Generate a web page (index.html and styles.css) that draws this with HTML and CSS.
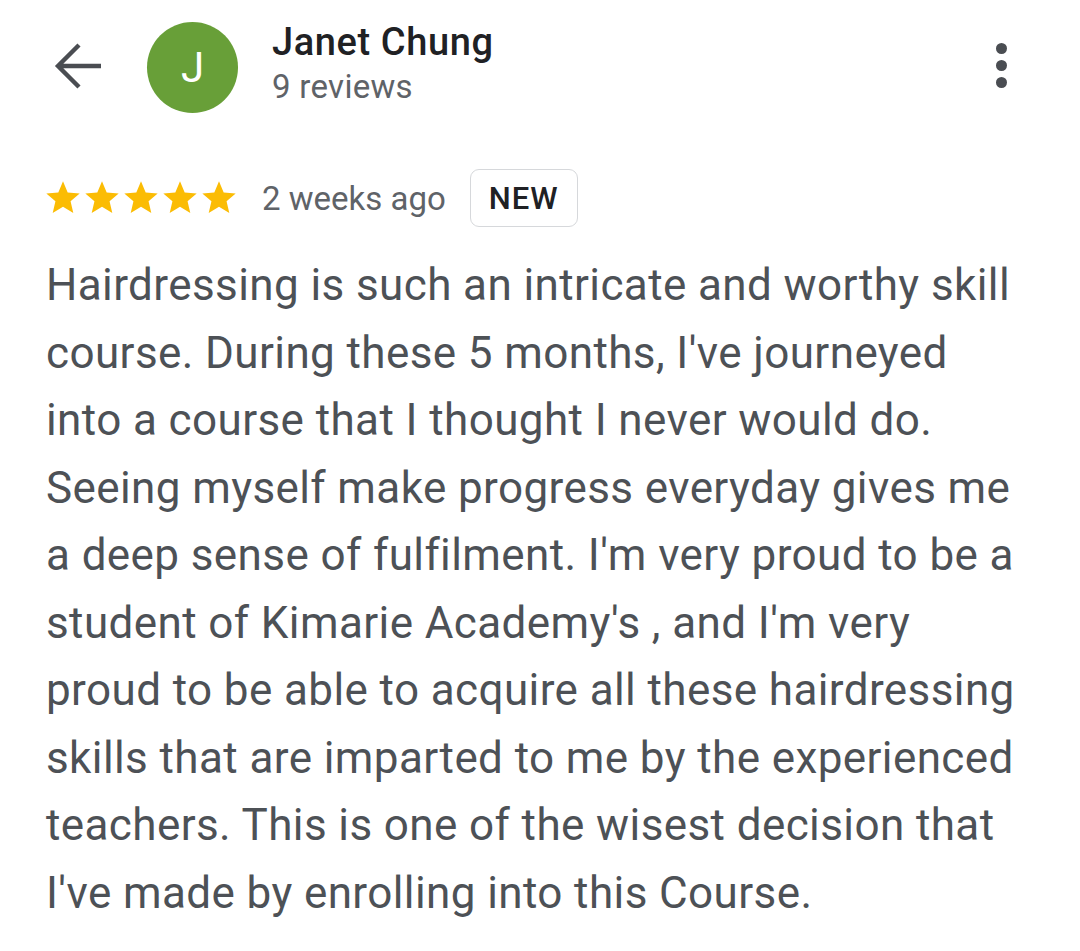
FILE: index.html
```html
<!DOCTYPE html>
<html lang="en">
<head>
    <meta charset="UTF-8">
    <meta name="viewport" content="width=device-width, initial-scale=1.0">
    <title>Janet Chung - Review</title>
    <link rel="stylesheet" href="styles.css">
</head>
<body>
    <div class="page">
        <div class="header">
            <button class="back-btn" aria-label="Back">
                <svg width="48" height="48" viewBox="0 0 48 48">
                    <path d="M47 23H4 M25 2L4 23L25 44" fill="none" stroke="#4a4d52" stroke-width="4.4" stroke-linejoin="miter"/>
                </svg>
            </button>
            <div class="avatar">J</div>
            <div class="author">
                <div class="author-name">Janet Chung</div>
                <div class="author-meta">9 reviews</div>
            </div>
            <button class="menu-btn" aria-label="More">
                <span class="dot"></span>
                <span class="dot"></span>
                <span class="dot"></span>
            </button>
        </div>

        <div class="rating-row">
            <div class="stars">
                <svg class="star" viewBox="0 0 24 24"><path d="M12 17.27L18.18 21l-1.64-7.03L22 9.24l-7.19-.61L12 2 9.19 8.63 2 9.24l5.46 4.73L5.82 21z"/></svg>
                <svg class="star" viewBox="0 0 24 24"><path d="M12 17.27L18.18 21l-1.64-7.03L22 9.24l-7.19-.61L12 2 9.19 8.63 2 9.24l5.46 4.73L5.82 21z"/></svg>
                <svg class="star" viewBox="0 0 24 24"><path d="M12 17.27L18.18 21l-1.64-7.03L22 9.24l-7.19-.61L12 2 9.19 8.63 2 9.24l5.46 4.73L5.82 21z"/></svg>
                <svg class="star" viewBox="0 0 24 24"><path d="M12 17.27L18.18 21l-1.64-7.03L22 9.24l-7.19-.61L12 2 9.19 8.63 2 9.24l5.46 4.73L5.82 21z"/></svg>
                <svg class="star" viewBox="0 0 24 24"><path d="M12 17.27L18.18 21l-1.64-7.03L22 9.24l-7.19-.61L12 2 9.19 8.63 2 9.24l5.46 4.73L5.82 21z"/></svg>
            </div>
            <span class="review-date">2 weeks ago</span>
            <span class="badge">NEW</span>
        </div>

        <p class="review-text">Hairdressing is such an intricate and worthy skill course. During these 5 months, I've journeyed into a course that I thought I never would do. Seeing myself make progress everyday gives me a deep sense of fulfilment. I'm very proud to be a student of Kimarie Academy's , and I'm very proud to be able to acquire all these hairdressing skills that are imparted to me by the experienced teachers. This is one of the wisest decision that I've made by enrolling into this Course.</p>
    </div>
</body>
</html>
```

FILE: styles.css
```css
body {
    font-family: Roboto, "Noto Sans", Arial, sans-serif;
    background-color: #ffffff;
    margin: 0;
}

.page {
    width: 1080px;
    height: 951px;
    overflow: hidden;
    box-sizing: border-box;
    padding: 22px 0 0 46px;
}

.header {
    display: flex;
    align-items: center;
    height: 90px;
}

.back-btn {
    border: none;
    background: none;
    padding: 0;
    width: 48px;
    height: 48px;
    margin-left: 8px;
    display: flex;
    cursor: pointer;
}

.avatar {
    width: 91px;
    height: 91px;
    border-radius: 50%;
    background-color: #689f38;
    color: #ffffff;
    font-size: 42px;
    display: flex;
    align-items: center;
    justify-content: center;
    margin-left: 45px;
}

.author {
    margin-left: 34px;
    flex: 1;
    display: flex;
    flex-direction: column;
    margin-top: -5px;
}

.author-name {
    font-size: 38px;
    font-weight: 500;
    color: #202124;
    line-height: 44px;
    letter-spacing: 0.6px;
}

.author-meta {
    font-size: 33px;
    color: #5f6368;
    line-height: 46px;
    letter-spacing: 0.3px;
}

.menu-btn {
    border: none;
    background: none;
    padding: 0;
    width: 20px;
    margin-right: 69px;
    display: flex;
    flex-direction: column;
    align-items: center;
    gap: 6px;
    margin-top: -3px;
}

.dot {
    width: 11px;
    height: 11px;
    border-radius: 50%;
    background-color: #4a4d52;
}

.rating-row {
    display: flex;
    align-items: center;
    margin-top: 57px;
    height: 58px;
}

.stars {
    display: flex;
    margin-left: -3px;
}

.star {
    width: 40px;
    height: 40px;
    margin-right: -1px;
    fill: #fbbc04;
}

.review-date {
    font-size: 33px;
    color: #5f6368;
    margin-left: 24px;
}

.badge {
    margin-left: 24px;
    height: 58px;
    box-sizing: border-box;
    padding: 0 18px;
    border: 1.5px solid #d6d8db;
    border-radius: 9px;
    display: flex;
    align-items: center;
    font-size: 31px;
    font-weight: 500;
    color: #202124;
    letter-spacing: 1px;
}

.review-text {
    margin: 25px 0 0 0;
    width: 980px;
    font-size: 44px;
    line-height: 67.5px;
    letter-spacing: 0.4px;
    color: #4d5156;
}
```
